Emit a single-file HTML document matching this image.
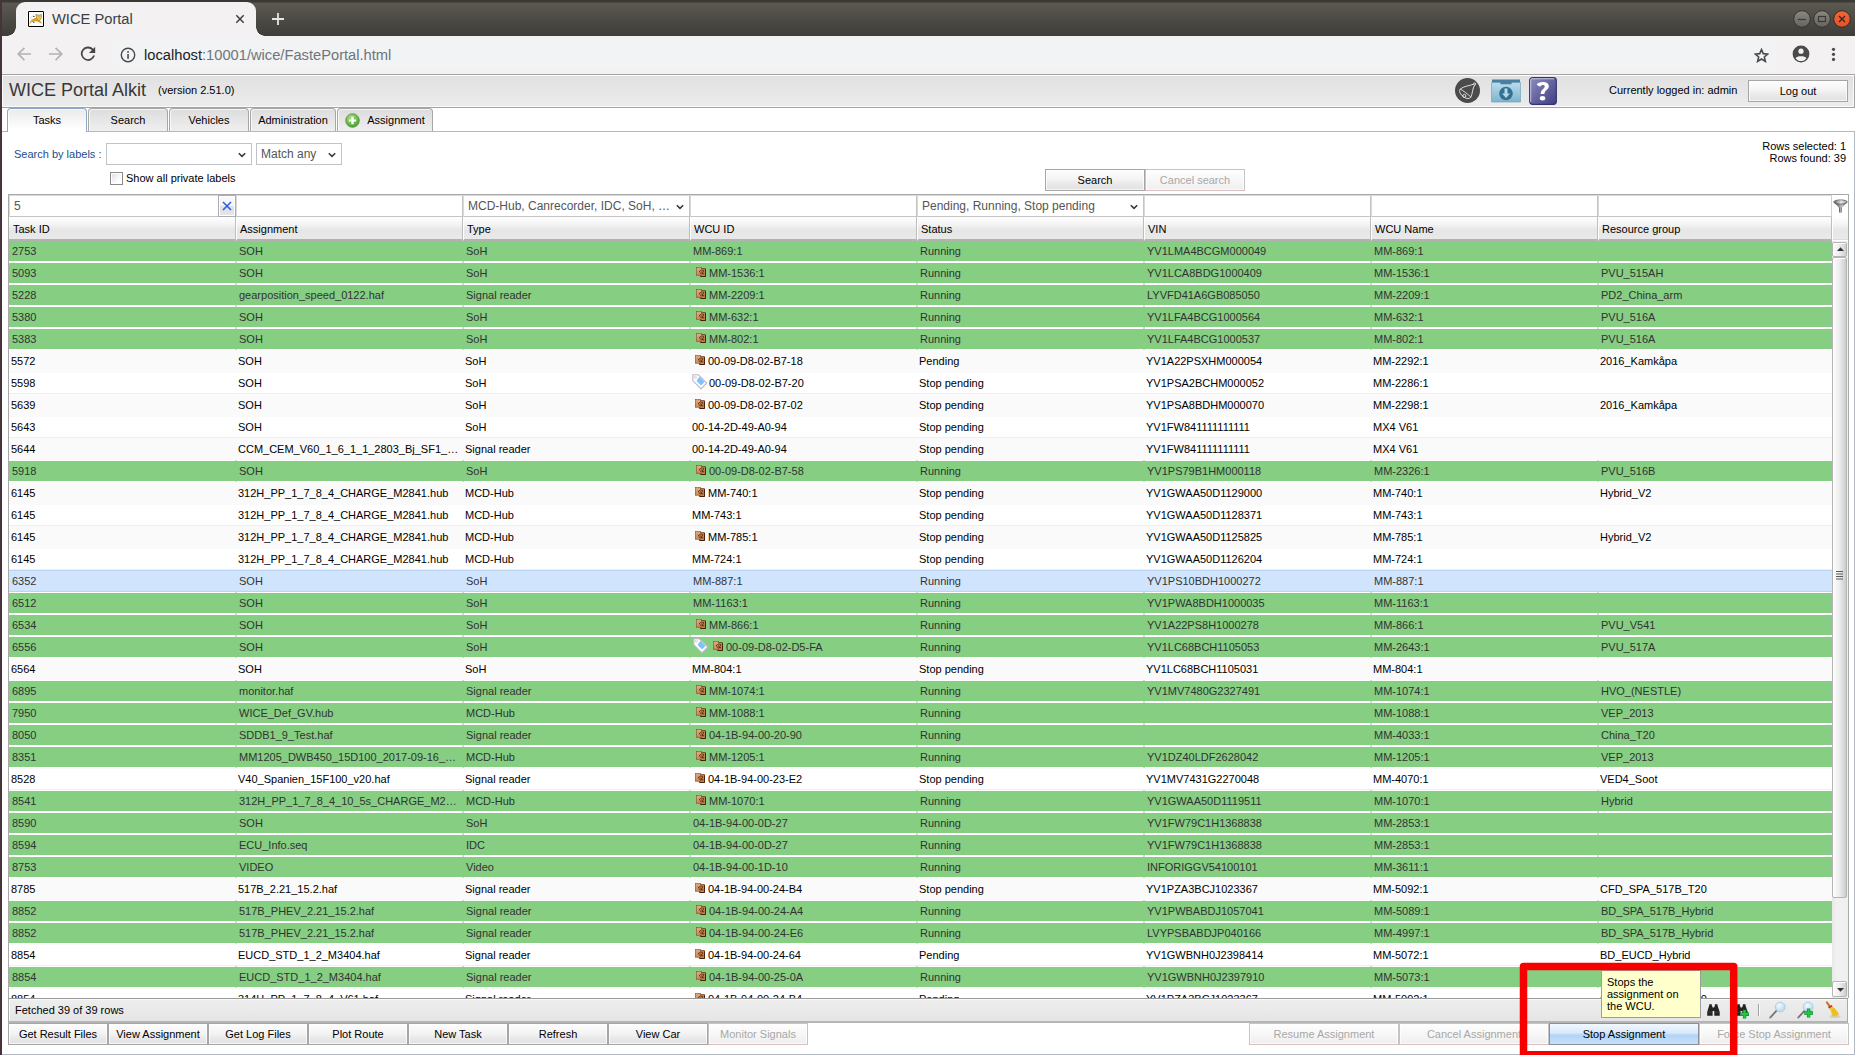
<!DOCTYPE html>
<html><head><meta charset="utf-8"><title>WICE Portal</title>
<style>
*{box-sizing:border-box;margin:0;padding:0}
html,body{width:1855px;height:1055px;overflow:hidden;background:#fff}
body{font-family:"Liberation Sans",sans-serif;font-size:11px;color:#000;position:relative}
.abs{position:absolute}
svg{display:block}
/* window chrome */
#titlebar{position:absolute;left:0;top:0;width:1855px;height:36px;background:linear-gradient(#3a3935 0,#3a3935 2px,#5b5951 3px,#4d4b45 19px,#3f3d39 36px)}
#lborder{position:absolute;left:0;top:0;width:2px;height:1055px;background:#46343a}
#ctab{position:absolute;left:16px;top:2px;width:240px;height:34px;background:#f3f1f1;border-radius:9px 9px 0 0}
#ctab:before,#ctab:after{content:"";position:absolute;bottom:0;width:9px;height:9px}
#ctab:before{left:-9px;background:radial-gradient(circle at 0 0,transparent 8.5px,#f3f1f1 9px)}
#ctab:after{right:-9px;background:radial-gradient(circle at 100% 0,transparent 8.5px,#f3f1f1 9px)}
#ctab .ttl{position:absolute;left:36px;top:9px;font-size:14.7px;color:#3b3f43;white-space:nowrap}
#toolbar{position:absolute;left:2px;top:36px;width:1853px;height:39px;background:#f3f1f1;border-bottom:1px solid #a4a4a4}
#omni{position:absolute;left:110px;top:4px;width:1666px;height:29px;border-radius:15px;background:#f1f3f4}
#url{position:absolute;left:142px;top:11px;font-size:14.7px;color:#202124;white-space:nowrap}
#url i{font-style:normal;color:#70757a}
/* page header */
#phead{position:absolute;left:2px;top:75px;width:1853px;height:33px;background:linear-gradient(#e1e1e1 0,#ececec 100%);border-top:1px solid #fdfdfd;border-right:1px solid #a3a3a3;box-shadow:inset 1px -1px 0 #fafafa,inset -1px 0 0 #fafafa;border-bottom:1px solid #a3a3a3}
#ptitle{position:absolute;left:7px;top:4px;font-size:18px;color:#383838;white-space:nowrap}
#pver{position:absolute;left:156px;top:8px;font-size:11px;color:#000}
.btn{position:absolute;height:22px;border:1px solid #a6a6a6;background:linear-gradient(#fdfdfd 0%,#f4f4f4 45%,#e9e9e9 70%,#e1e1e1 100%);font-size:11px;text-align:center;line-height:20px;color:#000;white-space:nowrap;box-shadow:inset 0 0 0 1px rgba(255,255,255,.7)}
.btn.dis{color:#a8a8a8;border-color:#c4c4c4 #c4c4c4 #d9c0c0 #c4c4c4;background:linear-gradient(#fefefe,#f7f7f7 50%,#eeeeee)}
.btn.over{background:linear-gradient(#f2f8ff 0%,#d9e9fb 45%,#b3d4f6 55%,#c6dff9 100%);border-color:#8a9099;box-shadow:none}
/* tabs */
.tab{position:absolute;top:108px;height:23px;border:1px solid #a7a7a7;border-bottom:none;border-radius:4px 4px 0 0;background:linear-gradient(#dcdcdc,#e6e6e6 50%,#efefef);font-size:11px;text-align:center;line-height:23px;box-shadow:inset 1px 1px 0 rgba(255,255,255,.7)}
.tab.sel{background:linear-gradient(#eaeaea,#f6f6f6 50%,#ffffff 90%);border-color:#8fa6c4;height:24px;z-index:3}
#pane{position:absolute;left:2px;top:131px;width:1853px;height:924px;border:1px solid #b3b9c2;border-left:none;background:#fff}
.sel1{position:absolute;height:22px;border:1px solid #c0c3c7;background:#fff;font-size:12px;color:#555;line-height:20px;padding-left:4px;white-space:nowrap;overflow:hidden}
.chev{position:absolute;right:5px;top:8px}
/* grid */
#grid{position:absolute;left:8px;top:194px;width:1841px;height:804px;border:1px solid #a9a9a9;border-bottom:none;background:#fff;overflow:hidden}
#filter{position:absolute;left:0;top:0;width:1839px;height:22px;background:#fff}
.fcell{position:absolute;top:0;height:22px;border:1px solid #c4c4c4;border-top-color:#d9d9d9;border-left-color:#d9d9d9;background:#fff;font-size:12px;color:#555;line-height:20px;padding-left:4px;white-space:nowrap;overflow:hidden}
#hdr{position:absolute;left:0;top:22px;width:1839px;height:24px;z-index:5}
.h{position:absolute;top:0;height:24px;background:linear-gradient(#ffffff 0%,#f3f3f3 35%,#e6e6e6 60%,#e9e9e9 100%);border-right:1px solid #bdbdbd;border-left:1px solid #fff;border-bottom:2px solid #b2b2b2;font-size:11px;line-height:24px;padding-left:3px;color:#000;white-space:nowrap}
#body{position:absolute;left:0;top:45px;width:1824px;height:758px;overflow:hidden;background:#fff}
.r{position:absolute;left:0;width:1824px;height:22px;white-space:nowrap}
.r>div{position:absolute;top:0;height:22px;line-height:22px;padding-left:2px;overflow:hidden;font-size:11px}
.r.w{background:#fff;box-shadow:inset 0 1px 0 #fafafa,inset 0 -1px 0 #efefef}
.r.w.a{background:#fafafa;box-shadow:none}
.r.g{background:linear-gradient(#c2e6c0 0,#c2e6c0 1px,#85ce82 1px,#85ce82 21px,#c2e6c0 21px)}
.r.g>div{color:#333;box-shadow:inset 0 1px 0 #fff,inset 0 -1px 0 #fff;padding-left:3px}
.r.s{background:#d0e5fd;border-top:1px solid #bad5f3;border-bottom:1px solid #bad5f3}
.r.s>div{color:#333;padding-left:3px;top:-1px}
.c0{left:0;width:226px}.c1{left:228px;width:225px}.c2{left:455px;width:225px}.c3{left:682px;width:225px}
.c4{left:909px;width:225px}.c5{left:1136px;width:225px}.c6{left:1363px;width:225px}.c7{left:1590px;width:234px}
.r.w>div+div{margin-left:-1px}
.ib{position:absolute;left:5px;top:5px}
.it{position:absolute;left:2px;top:2px}
.ib+span,.it+span{position:absolute;left:18px}
.ktb .ib{left:22px}
.ktb span{left:35px !important}
.kt span{left:19px !important}
.r.g>div+div,.r.s>div+div{padding-left:2px}
/* scrollbar */
#sb{position:absolute;left:1823px;top:46px;width:16px;height:757px;background:linear-gradient(90deg,#e9e9e9,#f1f1f1 30%,#efefef)}
#status{position:absolute;left:8px;top:998px;width:1840px;height:25px;background:linear-gradient(#eeeeee,#e5e5e5);box-shadow:inset 1px 1px 0 #f9f9f9;border:1px solid #a9a9a9;border-top:1px solid #999;border-bottom:2px solid #b5b5b5;font-size:11px;line-height:22px;padding-left:6px}
</style></head><body>
<div id="titlebar"></div>
<div id="ctab"><span class="ttl">WICE Portal</span>
 <svg class="abs" style="left:11px;top:8px;overflow:visible" width="18" height="18" viewBox="-1 -1 18 18"><rect x="-0.6" y="-0.6" width="17.2" height="17.2" rx="1.5" fill="#fff"/><rect x="0.5" y="0.5" width="15" height="15" rx="0.2" fill="#fff" stroke="#000" stroke-width="1"/><path d="M3.4 9 C1.9 7.2 2.8 5.2 5.2 5.2" fill="none" stroke="#d6d6d6" stroke-width="0.9"/><path d="M5 5.3 L6.6 5.6" stroke="#333" stroke-width="0.9"/><path d="M1.3 12.5 L2.8 9.8 C4.8 7.6 7.6 6.4 9.2 6.8 L11.6 9 L14.4 12.4 L12.6 12.2 L9.4 10.6 L6.2 10.5 L3.4 11 L2.5 12.6 Z" fill="#dba22c"/><path d="M5 10.6 L6.4 12" stroke="#222" stroke-width="1"/><path d="M7.9 3.1 L8.8 4 H12.3 L13.3 3.1 L13.4 6.6 L12.2 9 L10.2 9.4 L8.7 7.6 Z" fill="#f4ca4c" stroke="#8f7030" stroke-width="0.6"/><path d="M9.6 5.2 H12 V7 H10 Z" fill="#e3b340"/></svg>
 <svg class="abs" style="left:219px;top:12px" width="10" height="10" viewBox="0 0 10 10"><path d="M1.3 1.3 L8.7 8.7 M8.7 1.3 L1.3 8.7" stroke="#3c4043" stroke-width="1.5" fill="none"/></svg>
</div>
<svg class="abs" style="left:271px;top:12px" width="14" height="14" viewBox="0 0 14 14"><path d="M7 1 V13 M1 7 H13" stroke="#e6e6e6" stroke-width="1.8"/></svg>
<!-- window buttons -->
<svg class="abs" style="left:1790px;top:8px" width="64" height="22" viewBox="0 0 64 22">
 <defs><linearGradient id="wg" x1="0" y1="0" x2="0" y2="1"><stop offset="0" stop-color="#8a8880"/><stop offset="1" stop-color="#65635c"/></linearGradient>
 <linearGradient id="wr" x1="0" y1="0" x2="0" y2="1"><stop offset="0" stop-color="#f0653a"/><stop offset="1" stop-color="#e3532a"/></linearGradient></defs>
 <circle cx="12" cy="11" r="8.3" fill="url(#wg)" stroke="#35342d" stroke-width="1"/>
 <circle cx="32" cy="11" r="8.3" fill="url(#wg)" stroke="#35342d" stroke-width="1"/>
 <circle cx="52" cy="11" r="8.3" fill="url(#wr)" stroke="#3a2a22" stroke-width="1"/>
 <path d="M8 11.5 H16" stroke="#3a3934" stroke-width="1.2"/>
 <rect x="28.5" y="8.5" width="7" height="5" fill="none" stroke="#3a3934" stroke-width="1.2"/>
 <path d="M49 8 L55 14 M55 8 L49 14" stroke="#3a2418" stroke-width="1.3"/>
</svg>
<div id="toolbar"><div id="omni"></div><div id="url">localhost<i>:10001/wice/FastePortal.html</i></div>
 <svg class="abs" style="left:14px;top:10px" width="16" height="16" viewBox="0 0 16 16"><path d="M15 7.2 H4.2 L9 2.4 L7.9 1.3 L1 8 L7.9 14.7 L9 13.6 L4.2 8.8 H15 Z" fill="#b3b3b3"/></svg>
 <svg class="abs" style="left:46px;top:10px" width="16" height="16" viewBox="0 0 16 16"><path d="M1 7.2 H11.8 L7 2.4 L8.1 1.3 L15 8 L8.1 14.7 L7 13.6 L11.8 8.8 H1 Z" fill="#b3b3b3"/></svg>
 <svg class="abs" style="left:78px;top:10px" width="16" height="16" viewBox="0 0 16 16"><path d="M13.3 2.7 A7.2 7.2 0 1 0 15 9.6 H13.1 A5.4 5.4 0 1 1 11.9 4.1 L9 7 H15.2 V0.8 Z" fill="#474747"/></svg>
 <svg class="abs" style="left:118px;top:11px" width="16" height="16" viewBox="0 0 15 15"><circle cx="7.5" cy="7.5" r="6.3" fill="none" stroke="#4a4a4a" stroke-width="1.3"/><rect x="6.8" y="6.6" width="1.5" height="4.4" fill="#4a4a4a"/><rect x="6.8" y="3.9" width="1.5" height="1.6" fill="#4a4a4a"/></svg>
 <svg class="abs" style="left:1752px;top:12px" width="15" height="15" viewBox="0 0 17 17"><path d="M8.5 1.8 L10.5 6.4 L15.5 6.9 L11.7 10.2 L12.9 15.2 L8.5 12.5 L4.1 15.2 L5.3 10.2 L1.5 6.9 L6.5 6.4 Z" fill="none" stroke="#4a4a4a" stroke-width="1.8" stroke-linejoin="miter"/></svg>
 <svg class="abs" style="left:1790px;top:9px" width="18" height="18" viewBox="0 0 18 18"><circle cx="9" cy="9" r="8.4" fill="#4a4a4a"/><circle cx="9" cy="6.2" r="2.6" fill="#f3f1f1"/><path d="M3.6 13.2 C4.8 10.6 13.2 10.6 14.4 13.2 C13 15.2 11 16 9 16 C7 16 5 15.2 3.6 13.2 Z" fill="#f3f1f1"/></svg>
 <svg class="abs" style="left:1829px;top:11px" width="5" height="15" viewBox="0 0 5 15"><circle cx="2.5" cy="2.3" r="1.6" fill="#4a4a4a"/><circle cx="2.5" cy="7.3" r="1.6" fill="#4a4a4a"/><circle cx="2.5" cy="12.4" r="1.6" fill="#4a4a4a"/></svg>
</div>
<div id="phead">
 <div id="ptitle">WICE Portal Alkit</div><div id="pver">(version 2.51.0)</div>
 <svg class="abs" style="left:1452px;top:1px" width="27" height="27" viewBox="0 0 27 27"><circle cx="13.5" cy="13.5" r="12.5" fill="#4b4b4b"/><g fill="none" stroke="#ececec" stroke-width="0.9"><path d="M19.6 7.2 C15.5 8.8 9.5 9.2 6.3 12 C4.4 13.8 6.4 17.6 9.6 19.9 C12.6 22 15.8 22 16.9 20.1 C18.6 16.6 18.4 11.6 20.6 8.2"/><path d="M6.3 12 C8 13 14.5 17.5 16.9 20.1"/><circle cx="10.3" cy="18.9" r="1.5"/><circle cx="20.6" cy="7" r="1.1"/></g></svg>
 <svg class="abs" style="left:1489px;top:3px" width="30" height="24" viewBox="0 0 30 24"><defs><linearGradient id="fg" x1="0" y1="0" x2="0" y2="1"><stop offset="0" stop-color="#b9dced"/><stop offset="1" stop-color="#7fb4cf"/></linearGradient></defs><path d="M1 0.5 H29 V5 H1 Z" fill="#4a7f9e"/><path d="M0.5 3.5 H9 L10 5.3 H20 L21 3.5 H29.5 V23 H0.5 Z" fill="url(#fg)" stroke="#6a9cb6" stroke-width="0.6"/><circle cx="15" cy="14.5" r="6.8" fill="#35708f"/><path d="M13.5 9.5 H16.5 V14.5 H19 L15 19 L11 14.5 H13.5 Z" fill="#b5d8ea"/></svg>
 <svg class="abs" style="left:1527px;top:1px" width="28" height="28" viewBox="0 0 29 29"><defs><linearGradient id="hg" x1="0" y1="0" x2="1" y2="1"><stop offset="0" stop-color="#8d8cc0"/><stop offset="1" stop-color="#3f3e82"/></linearGradient></defs><rect x="0.7" y="0.7" width="27.6" height="27.6" rx="3" fill="url(#hg)" stroke="#34336e" stroke-width="1.2"/><path d="M1.8 26 V3 Q1.8 1.8 3 1.8 H26" fill="none" stroke="#c9c8e6" stroke-width="1"/><path d="M8 8 C9 4.5 20.5 3.5 20.5 9.5 C20.5 13.5 15.8 13.5 16 17.5 H12.2 C12 12.5 16.3 12.5 16.3 9.8 C16.3 7.8 12.5 8 11.5 10 Z" fill="#fff"/><ellipse cx="14" cy="22" rx="2.8" ry="2.3" fill="#fff"/></svg>
 <div class="abs" style="left:1607px;top:8px;font-size:11px;white-space:nowrap">Currently logged in: admin</div>
 <div class="btn" style="left:1746px;top:4px;width:100px">Log out</div>
</div>
<div id="pane"></div>
<div class="tab sel" style="left:7px;width:80px">Tasks</div>
<div class="tab" style="left:88px;width:80px">Search</div>
<div class="tab" style="left:169px;width:80px">Vehicles</div>
<div class="tab" style="left:250px;width:86px">Administration</div>
<div class="tab" style="left:337px;width:96px;padding-left:22px">Assignment
 <svg class="abs" style="left:7px;top:4px" width="15" height="15" viewBox="0 0 15 15"><defs><radialGradient id="gg" cx="0.4" cy="0.3" r="0.8"><stop offset="0" stop-color="#a8e07c"/><stop offset="1" stop-color="#3f9a2a"/></radialGradient></defs><circle cx="7.5" cy="7.5" r="6.8" fill="url(#gg)" stroke="#4c8f3a" stroke-width="0.8"/><path d="M7.5 3.8 V11.2 M3.8 7.5 H11.2" stroke="#fff" stroke-width="2.2"/></svg>
</div>

<div class="abs" style="left:14px;top:148px;color:#1c4d8f;font-size:11px;white-space:nowrap">Search by labels :</div>
<div class="sel1" style="left:106px;top:143px;width:146px"><svg class="chev" width="8" height="6" viewBox="0 0 8 6"><path d="M0.8 1.2 L4 4.4 L7.2 1.2" stroke="#3a3a3a" stroke-width="1.6" fill="none"/></svg></div>
<div class="sel1" style="left:256px;top:143px;width:86px">Match any<svg class="chev" width="8" height="6" viewBox="0 0 8 6"><path d="M0.8 1.2 L4 4.4 L7.2 1.2" stroke="#3a3a3a" stroke-width="1.6" fill="none"/></svg></div>
<div class="abs" style="left:110px;top:172px;width:13px;height:13px;border:1px solid #8a8a8a;background:linear-gradient(135deg,#dcdcdc,#fff 70%);box-shadow:inset 0 0 0 1px #fff"></div>
<div class="abs" style="left:126px;top:172px;white-space:nowrap">Show all private labels</div>
<div class="abs" style="left:1700px;top:140px;width:146px;text-align:right;line-height:12px;white-space:nowrap">Rows selected: 1<br>Rows found: 39</div>
<div class="btn" style="left:1045px;top:169px;width:100px">Search</div>
<div class="btn dis" style="left:1145px;top:169px;width:100px">Cancel search</div>
<div id="grid">
 <div id="filter">
  <div class="fcell" style="left:0;width:227px">5</div>
  <div class="abs" style="left:209px;top:0;width:18px;height:22px;border:1px solid #a9adb6;background:linear-gradient(#fafafa 0,#f2f2f2 50%,#e0e0e0 50%,#e6e6e6 100%);box-shadow:inset 0 0 0 1px #fff"><svg class="abs" style="left:3px;top:5px" width="10" height="10" viewBox="0 0 10 10"><path d="M1 1 L9 9 M9 1 L1 9" stroke="#1f5cf0" stroke-width="1.5"/></svg></div>
  <div class="fcell" style="left:227px;width:227px"></div>
  <div class="fcell" style="left:454px;width:227px">MCD-Hub, Canrecorder, IDC, SoH, …<svg class="chev" width="8" height="6" viewBox="0 0 8 6"><path d="M0.8 1.2 L4 4.4 L7.2 1.2" stroke="#3a3a3a" stroke-width="1.6" fill="none"/></svg></div>
  <div class="fcell" style="left:681px;width:227px"></div>
  <div class="fcell" style="left:908px;width:227px">Pending, Running, Stop pending<svg class="chev" width="8" height="6" viewBox="0 0 8 6"><path d="M0.8 1.2 L4 4.4 L7.2 1.2" stroke="#3a3a3a" stroke-width="1.6" fill="none"/></svg></div>
  <div class="fcell" style="left:1135px;width:227px"></div>
  <div class="fcell" style="left:1362px;width:227px"></div>
  <div class="fcell" style="left:1589px;width:234px"></div>
  <div class="abs" style="left:1822px;top:0;width:17px;height:23px;border-left:1px solid #d0d0d0;background:#fff"><svg class="abs" style="left:1px;top:4px" width="15" height="15" viewBox="0 0 15 15"><defs><linearGradient id="fu" x1="0" y1="0" x2="1" y2="0"><stop offset="0" stop-color="#3a3a3a"/><stop offset="0.6" stop-color="#c4c4c4"/><stop offset="1" stop-color="#5c5c5c"/></linearGradient><linearGradient id="fu2" x1="0" y1="0" x2="1" y2="0"><stop offset="0" stop-color="#5c5c5c"/><stop offset="0.55" stop-color="#ececec"/><stop offset="1" stop-color="#909090"/></linearGradient></defs><path d="M0.9 3.2 L6.2 9 H8.8 L14.1 3.2 Z" fill="url(#fu)"/><path d="M6.1 8.6 H8.9 V13.3 Q7.5 14.3 6.1 13.3 Z" fill="url(#fu)"/><ellipse cx="7.5" cy="3" rx="6.8" ry="2.1" fill="url(#fu2)" stroke="#5c5c5c" stroke-width="0.8"/></svg></div>
 </div>
 <div id="hdr">
  <div class="h" style="left:0;width:227px;border-left:none;padding-left:4px">Task ID</div>
  <div class="h" style="left:227px;width:227px">Assignment</div>
  <div class="h" style="left:454px;width:227px">Type</div>
  <div class="h" style="left:681px;width:227px">WCU ID</div>
  <div class="h" style="left:908px;width:227px">Status</div>
  <div class="h" style="left:1135px;width:227px">VIN</div>
  <div class="h" style="left:1362px;width:227px">WCU Name</div>
  <div class="h" style="left:1589px;width:234px">Resource group</div>
  <div class="h" style="left:1823px;width:16px;border-right:none;border-bottom:1px solid #dcdcdc;height:23px"></div>
 </div>
 <div id="body">
<div class="r g" style="top:0px"><div class="c0">2753</div><div class="c1">SOH</div><div class="c2">SoH</div><div class="c3"><span>MM-869:1</span></div><div class="c4">Running</div><div class="c5">YV1LMA4BCGM000049</div><div class="c6">MM-869:1</div><div class="c7"></div></div>
<div class="r g" style="top:22px"><div class="c0">5093</div><div class="c1">SOH</div><div class="c2">SoH</div><div class="c3 kb"><svg class="ib" width="10" height="10" viewBox="0 0 10 10"><defs><linearGradient id="bx" x1="0" y1="0" x2="0" y2="1"><stop offset="0" stop-color="#e3ac7c"/><stop offset="1" stop-color="#c98858"/></linearGradient></defs><rect x="4.3" y="1.7" width="5.3" height="7.9" fill="#c08552" stroke="#5a2a0c" stroke-width="0.7"/><path d="M9.5 2.4 V9.5 H5" stroke="#431a04" stroke-width="0.9" fill="none"/><rect x="0.2" y="0.2" width="5.4" height="8" fill="url(#bx)" stroke="#7a4420" stroke-width="0.6"/><path d="M4.6 3.2 L3.4 5 L5 6.6 M6.4 3.2 C7.8 2.8 8 4.2 6.6 5.6 L6.4 6.8 H8.2" stroke="#3a1804" stroke-width="0.85" fill="none"/></svg><span>MM-1536:1</span></div><div class="c4">Running</div><div class="c5">YV1LCA8BDG1000409</div><div class="c6">MM-1536:1</div><div class="c7">PVU_515AH</div></div>
<div class="r g" style="top:44px"><div class="c0">5228</div><div class="c1">gearposition_speed_0122.haf</div><div class="c2">Signal reader</div><div class="c3 kb"><svg class="ib" width="10" height="10" viewBox="0 0 10 10"><defs><linearGradient id="bx" x1="0" y1="0" x2="0" y2="1"><stop offset="0" stop-color="#e3ac7c"/><stop offset="1" stop-color="#c98858"/></linearGradient></defs><rect x="4.3" y="1.7" width="5.3" height="7.9" fill="#c08552" stroke="#5a2a0c" stroke-width="0.7"/><path d="M9.5 2.4 V9.5 H5" stroke="#431a04" stroke-width="0.9" fill="none"/><rect x="0.2" y="0.2" width="5.4" height="8" fill="url(#bx)" stroke="#7a4420" stroke-width="0.6"/><path d="M4.6 3.2 L3.4 5 L5 6.6 M6.4 3.2 C7.8 2.8 8 4.2 6.6 5.6 L6.4 6.8 H8.2" stroke="#3a1804" stroke-width="0.85" fill="none"/></svg><span>MM-2209:1</span></div><div class="c4">Running</div><div class="c5">LYVFD41A6GB085050</div><div class="c6">MM-2209:1</div><div class="c7">PD2_China_arm</div></div>
<div class="r g" style="top:66px"><div class="c0">5380</div><div class="c1">SOH</div><div class="c2">SoH</div><div class="c3 kb"><svg class="ib" width="10" height="10" viewBox="0 0 10 10"><defs><linearGradient id="bx" x1="0" y1="0" x2="0" y2="1"><stop offset="0" stop-color="#e3ac7c"/><stop offset="1" stop-color="#c98858"/></linearGradient></defs><rect x="4.3" y="1.7" width="5.3" height="7.9" fill="#c08552" stroke="#5a2a0c" stroke-width="0.7"/><path d="M9.5 2.4 V9.5 H5" stroke="#431a04" stroke-width="0.9" fill="none"/><rect x="0.2" y="0.2" width="5.4" height="8" fill="url(#bx)" stroke="#7a4420" stroke-width="0.6"/><path d="M4.6 3.2 L3.4 5 L5 6.6 M6.4 3.2 C7.8 2.8 8 4.2 6.6 5.6 L6.4 6.8 H8.2" stroke="#3a1804" stroke-width="0.85" fill="none"/></svg><span>MM-632:1</span></div><div class="c4">Running</div><div class="c5">YV1LFA4BCG1000564</div><div class="c6">MM-632:1</div><div class="c7">PVU_516A</div></div>
<div class="r g" style="top:88px"><div class="c0">5383</div><div class="c1">SOH</div><div class="c2">SoH</div><div class="c3 kb"><svg class="ib" width="10" height="10" viewBox="0 0 10 10"><defs><linearGradient id="bx" x1="0" y1="0" x2="0" y2="1"><stop offset="0" stop-color="#e3ac7c"/><stop offset="1" stop-color="#c98858"/></linearGradient></defs><rect x="4.3" y="1.7" width="5.3" height="7.9" fill="#c08552" stroke="#5a2a0c" stroke-width="0.7"/><path d="M9.5 2.4 V9.5 H5" stroke="#431a04" stroke-width="0.9" fill="none"/><rect x="0.2" y="0.2" width="5.4" height="8" fill="url(#bx)" stroke="#7a4420" stroke-width="0.6"/><path d="M4.6 3.2 L3.4 5 L5 6.6 M6.4 3.2 C7.8 2.8 8 4.2 6.6 5.6 L6.4 6.8 H8.2" stroke="#3a1804" stroke-width="0.85" fill="none"/></svg><span>MM-802:1</span></div><div class="c4">Running</div><div class="c5">YV1LFA4BCG1000537</div><div class="c6">MM-802:1</div><div class="c7">PVU_516A</div></div>
<div class="r w a" style="top:110px"><div class="c0">5572</div><div class="c1">SOH</div><div class="c2">SoH</div><div class="c3 kb"><svg class="ib" width="10" height="10" viewBox="0 0 10 10"><defs><linearGradient id="bx" x1="0" y1="0" x2="0" y2="1"><stop offset="0" stop-color="#e3ac7c"/><stop offset="1" stop-color="#c98858"/></linearGradient></defs><rect x="4.3" y="1.7" width="5.3" height="7.9" fill="#c08552" stroke="#5a2a0c" stroke-width="0.7"/><path d="M9.5 2.4 V9.5 H5" stroke="#431a04" stroke-width="0.9" fill="none"/><rect x="0.2" y="0.2" width="5.4" height="8" fill="url(#bx)" stroke="#7a4420" stroke-width="0.6"/><path d="M4.6 3.2 L3.4 5 L5 6.6 M6.4 3.2 C7.8 2.8 8 4.2 6.6 5.6 L6.4 6.8 H8.2" stroke="#3a1804" stroke-width="0.85" fill="none"/></svg><span>00-09-D8-02-B7-18</span></div><div class="c4">Pending</div><div class="c5">YV1A22PSXHM000054</div><div class="c6">MM-2292:1</div><div class="c7">2016_Kamkåpa</div></div>
<div class="r w" style="top:132px"><div class="c0">5598</div><div class="c1">SOH</div><div class="c2">SoH</div><div class="c3 kt"><svg class="it" width="16" height="16" viewBox="0 0 16 16"><path d="M0.8 0.8 L6.3 0.8 L14.8 9 L9 14.9 L0.8 6.6 Z" fill="#fff" stroke="#c3b4ca" stroke-width="1.1"/><path d="M6.2 4.2 L7.6 3 L12.6 8 L9 11.4 L4.6 7 Z" fill="#7cc4fb"/><circle cx="3.3" cy="3.3" r="1.1" fill="#fff" stroke="#bdbdbd" stroke-width="0.7"/></svg><span>00-09-D8-02-B7-20</span></div><div class="c4">Stop pending</div><div class="c5">YV1PSA2BCHM000052</div><div class="c6">MM-2286:1</div><div class="c7"></div></div>
<div class="r w a" style="top:154px"><div class="c0">5639</div><div class="c1">SOH</div><div class="c2">SoH</div><div class="c3 kb"><svg class="ib" width="10" height="10" viewBox="0 0 10 10"><defs><linearGradient id="bx" x1="0" y1="0" x2="0" y2="1"><stop offset="0" stop-color="#e3ac7c"/><stop offset="1" stop-color="#c98858"/></linearGradient></defs><rect x="4.3" y="1.7" width="5.3" height="7.9" fill="#c08552" stroke="#5a2a0c" stroke-width="0.7"/><path d="M9.5 2.4 V9.5 H5" stroke="#431a04" stroke-width="0.9" fill="none"/><rect x="0.2" y="0.2" width="5.4" height="8" fill="url(#bx)" stroke="#7a4420" stroke-width="0.6"/><path d="M4.6 3.2 L3.4 5 L5 6.6 M6.4 3.2 C7.8 2.8 8 4.2 6.6 5.6 L6.4 6.8 H8.2" stroke="#3a1804" stroke-width="0.85" fill="none"/></svg><span>00-09-D8-02-B7-02</span></div><div class="c4">Stop pending</div><div class="c5">YV1PSA8BDHM000070</div><div class="c6">MM-2298:1</div><div class="c7">2016_Kamkåpa</div></div>
<div class="r w" style="top:176px"><div class="c0">5643</div><div class="c1">SOH</div><div class="c2">SoH</div><div class="c3"><span>00-14-2D-49-A0-94</span></div><div class="c4">Stop pending</div><div class="c5">YV1FW841111111111</div><div class="c6">MX4 V61</div><div class="c7"></div></div>
<div class="r w a" style="top:198px"><div class="c0">5644</div><div class="c1">CCM_CEM_V60_1_6_1_1_2803_Bj_SF1_…</div><div class="c2">Signal reader</div><div class="c3"><span>00-14-2D-49-A0-94</span></div><div class="c4">Stop pending</div><div class="c5">YV1FW841111111111</div><div class="c6">MX4 V61</div><div class="c7"></div></div>
<div class="r g" style="top:220px"><div class="c0">5918</div><div class="c1">SOH</div><div class="c2">SoH</div><div class="c3 kb"><svg class="ib" width="10" height="10" viewBox="0 0 10 10"><defs><linearGradient id="bx" x1="0" y1="0" x2="0" y2="1"><stop offset="0" stop-color="#e3ac7c"/><stop offset="1" stop-color="#c98858"/></linearGradient></defs><rect x="4.3" y="1.7" width="5.3" height="7.9" fill="#c08552" stroke="#5a2a0c" stroke-width="0.7"/><path d="M9.5 2.4 V9.5 H5" stroke="#431a04" stroke-width="0.9" fill="none"/><rect x="0.2" y="0.2" width="5.4" height="8" fill="url(#bx)" stroke="#7a4420" stroke-width="0.6"/><path d="M4.6 3.2 L3.4 5 L5 6.6 M6.4 3.2 C7.8 2.8 8 4.2 6.6 5.6 L6.4 6.8 H8.2" stroke="#3a1804" stroke-width="0.85" fill="none"/></svg><span>00-09-D8-02-B7-58</span></div><div class="c4">Running</div><div class="c5">YV1PS79B1HM000118</div><div class="c6">MM-2326:1</div><div class="c7">PVU_516B</div></div>
<div class="r w a" style="top:242px"><div class="c0">6145</div><div class="c1">312H_PP_1_7_8_4_CHARGE_M2841.hub</div><div class="c2">MCD-Hub</div><div class="c3 kb"><svg class="ib" width="10" height="10" viewBox="0 0 10 10"><defs><linearGradient id="bx" x1="0" y1="0" x2="0" y2="1"><stop offset="0" stop-color="#e3ac7c"/><stop offset="1" stop-color="#c98858"/></linearGradient></defs><rect x="4.3" y="1.7" width="5.3" height="7.9" fill="#c08552" stroke="#5a2a0c" stroke-width="0.7"/><path d="M9.5 2.4 V9.5 H5" stroke="#431a04" stroke-width="0.9" fill="none"/><rect x="0.2" y="0.2" width="5.4" height="8" fill="url(#bx)" stroke="#7a4420" stroke-width="0.6"/><path d="M4.6 3.2 L3.4 5 L5 6.6 M6.4 3.2 C7.8 2.8 8 4.2 6.6 5.6 L6.4 6.8 H8.2" stroke="#3a1804" stroke-width="0.85" fill="none"/></svg><span>MM-740:1</span></div><div class="c4">Stop pending</div><div class="c5">YV1GWAA50D1129000</div><div class="c6">MM-740:1</div><div class="c7">Hybrid_V2</div></div>
<div class="r w" style="top:264px"><div class="c0">6145</div><div class="c1">312H_PP_1_7_8_4_CHARGE_M2841.hub</div><div class="c2">MCD-Hub</div><div class="c3"><span>MM-743:1</span></div><div class="c4">Stop pending</div><div class="c5">YV1GWAA50D1128371</div><div class="c6">MM-743:1</div><div class="c7"></div></div>
<div class="r w a" style="top:286px"><div class="c0">6145</div><div class="c1">312H_PP_1_7_8_4_CHARGE_M2841.hub</div><div class="c2">MCD-Hub</div><div class="c3 kb"><svg class="ib" width="10" height="10" viewBox="0 0 10 10"><defs><linearGradient id="bx" x1="0" y1="0" x2="0" y2="1"><stop offset="0" stop-color="#e3ac7c"/><stop offset="1" stop-color="#c98858"/></linearGradient></defs><rect x="4.3" y="1.7" width="5.3" height="7.9" fill="#c08552" stroke="#5a2a0c" stroke-width="0.7"/><path d="M9.5 2.4 V9.5 H5" stroke="#431a04" stroke-width="0.9" fill="none"/><rect x="0.2" y="0.2" width="5.4" height="8" fill="url(#bx)" stroke="#7a4420" stroke-width="0.6"/><path d="M4.6 3.2 L3.4 5 L5 6.6 M6.4 3.2 C7.8 2.8 8 4.2 6.6 5.6 L6.4 6.8 H8.2" stroke="#3a1804" stroke-width="0.85" fill="none"/></svg><span>MM-785:1</span></div><div class="c4">Stop pending</div><div class="c5">YV1GWAA50D1125825</div><div class="c6">MM-785:1</div><div class="c7">Hybrid_V2</div></div>
<div class="r w" style="top:308px"><div class="c0">6145</div><div class="c1">312H_PP_1_7_8_4_CHARGE_M2841.hub</div><div class="c2">MCD-Hub</div><div class="c3"><span>MM-724:1</span></div><div class="c4">Stop pending</div><div class="c5">YV1GWAA50D1126204</div><div class="c6">MM-724:1</div><div class="c7"></div></div>
<div class="r s" style="top:330px"><div class="c0">6352</div><div class="c1">SOH</div><div class="c2">SoH</div><div class="c3"><span>MM-887:1</span></div><div class="c4">Running</div><div class="c5">YV1PS10BDH1000272</div><div class="c6">MM-887:1</div><div class="c7"></div></div>
<div class="r g" style="top:352px"><div class="c0">6512</div><div class="c1">SOH</div><div class="c2">SoH</div><div class="c3"><span>MM-1163:1</span></div><div class="c4">Running</div><div class="c5">YV1PWA8BDH1000035</div><div class="c6">MM-1163:1</div><div class="c7"></div></div>
<div class="r g" style="top:374px"><div class="c0">6534</div><div class="c1">SOH</div><div class="c2">SoH</div><div class="c3 kb"><svg class="ib" width="10" height="10" viewBox="0 0 10 10"><defs><linearGradient id="bx" x1="0" y1="0" x2="0" y2="1"><stop offset="0" stop-color="#e3ac7c"/><stop offset="1" stop-color="#c98858"/></linearGradient></defs><rect x="4.3" y="1.7" width="5.3" height="7.9" fill="#c08552" stroke="#5a2a0c" stroke-width="0.7"/><path d="M9.5 2.4 V9.5 H5" stroke="#431a04" stroke-width="0.9" fill="none"/><rect x="0.2" y="0.2" width="5.4" height="8" fill="url(#bx)" stroke="#7a4420" stroke-width="0.6"/><path d="M4.6 3.2 L3.4 5 L5 6.6 M6.4 3.2 C7.8 2.8 8 4.2 6.6 5.6 L6.4 6.8 H8.2" stroke="#3a1804" stroke-width="0.85" fill="none"/></svg><span>MM-866:1</span></div><div class="c4">Running</div><div class="c5">YV1A22PS8H1000278</div><div class="c6">MM-866:1</div><div class="c7">PVU_V541</div></div>
<div class="r g" style="top:396px"><div class="c0">6556</div><div class="c1">SOH</div><div class="c2">SoH</div><div class="c3 ktb"><svg class="it" width="16" height="16" viewBox="0 0 16 16"><path d="M0.8 0.8 L6.3 0.8 L14.8 9 L9 14.9 L0.8 6.6 Z" fill="#fff" stroke="#c3b4ca" stroke-width="1.1"/><path d="M6.2 4.2 L7.6 3 L12.6 8 L9 11.4 L4.6 7 Z" fill="#7cc4fb"/><circle cx="3.3" cy="3.3" r="1.1" fill="#fff" stroke="#bdbdbd" stroke-width="0.7"/></svg><svg class="ib" width="10" height="10" viewBox="0 0 10 10"><defs><linearGradient id="bx" x1="0" y1="0" x2="0" y2="1"><stop offset="0" stop-color="#e3ac7c"/><stop offset="1" stop-color="#c98858"/></linearGradient></defs><rect x="4.3" y="1.7" width="5.3" height="7.9" fill="#c08552" stroke="#5a2a0c" stroke-width="0.7"/><path d="M9.5 2.4 V9.5 H5" stroke="#431a04" stroke-width="0.9" fill="none"/><rect x="0.2" y="0.2" width="5.4" height="8" fill="url(#bx)" stroke="#7a4420" stroke-width="0.6"/><path d="M4.6 3.2 L3.4 5 L5 6.6 M6.4 3.2 C7.8 2.8 8 4.2 6.6 5.6 L6.4 6.8 H8.2" stroke="#3a1804" stroke-width="0.85" fill="none"/></svg><span>00-09-D8-02-D5-FA</span></div><div class="c4">Running</div><div class="c5">YV1LC68BCH1105053</div><div class="c6">MM-2643:1</div><div class="c7">PVU_517A</div></div>
<div class="r w a" style="top:418px"><div class="c0">6564</div><div class="c1">SOH</div><div class="c2">SoH</div><div class="c3"><span>MM-804:1</span></div><div class="c4">Stop pending</div><div class="c5">YV1LC68BCH1105031</div><div class="c6">MM-804:1</div><div class="c7"></div></div>
<div class="r g" style="top:440px"><div class="c0">6895</div><div class="c1">monitor.haf</div><div class="c2">Signal reader</div><div class="c3 kb"><svg class="ib" width="10" height="10" viewBox="0 0 10 10"><defs><linearGradient id="bx" x1="0" y1="0" x2="0" y2="1"><stop offset="0" stop-color="#e3ac7c"/><stop offset="1" stop-color="#c98858"/></linearGradient></defs><rect x="4.3" y="1.7" width="5.3" height="7.9" fill="#c08552" stroke="#5a2a0c" stroke-width="0.7"/><path d="M9.5 2.4 V9.5 H5" stroke="#431a04" stroke-width="0.9" fill="none"/><rect x="0.2" y="0.2" width="5.4" height="8" fill="url(#bx)" stroke="#7a4420" stroke-width="0.6"/><path d="M4.6 3.2 L3.4 5 L5 6.6 M6.4 3.2 C7.8 2.8 8 4.2 6.6 5.6 L6.4 6.8 H8.2" stroke="#3a1804" stroke-width="0.85" fill="none"/></svg><span>MM-1074:1</span></div><div class="c4">Running</div><div class="c5">YV1MV7480G2327491</div><div class="c6">MM-1074:1</div><div class="c7">HVO_(NESTLE)</div></div>
<div class="r g" style="top:462px"><div class="c0">7950</div><div class="c1">WICE_Def_GV.hub</div><div class="c2">MCD-Hub</div><div class="c3 kb"><svg class="ib" width="10" height="10" viewBox="0 0 10 10"><defs><linearGradient id="bx" x1="0" y1="0" x2="0" y2="1"><stop offset="0" stop-color="#e3ac7c"/><stop offset="1" stop-color="#c98858"/></linearGradient></defs><rect x="4.3" y="1.7" width="5.3" height="7.9" fill="#c08552" stroke="#5a2a0c" stroke-width="0.7"/><path d="M9.5 2.4 V9.5 H5" stroke="#431a04" stroke-width="0.9" fill="none"/><rect x="0.2" y="0.2" width="5.4" height="8" fill="url(#bx)" stroke="#7a4420" stroke-width="0.6"/><path d="M4.6 3.2 L3.4 5 L5 6.6 M6.4 3.2 C7.8 2.8 8 4.2 6.6 5.6 L6.4 6.8 H8.2" stroke="#3a1804" stroke-width="0.85" fill="none"/></svg><span>MM-1088:1</span></div><div class="c4">Running</div><div class="c5"></div><div class="c6">MM-1088:1</div><div class="c7">VEP_2013</div></div>
<div class="r g" style="top:484px"><div class="c0">8050</div><div class="c1">SDDB1_9_Test.haf</div><div class="c2">Signal reader</div><div class="c3 kb"><svg class="ib" width="10" height="10" viewBox="0 0 10 10"><defs><linearGradient id="bx" x1="0" y1="0" x2="0" y2="1"><stop offset="0" stop-color="#e3ac7c"/><stop offset="1" stop-color="#c98858"/></linearGradient></defs><rect x="4.3" y="1.7" width="5.3" height="7.9" fill="#c08552" stroke="#5a2a0c" stroke-width="0.7"/><path d="M9.5 2.4 V9.5 H5" stroke="#431a04" stroke-width="0.9" fill="none"/><rect x="0.2" y="0.2" width="5.4" height="8" fill="url(#bx)" stroke="#7a4420" stroke-width="0.6"/><path d="M4.6 3.2 L3.4 5 L5 6.6 M6.4 3.2 C7.8 2.8 8 4.2 6.6 5.6 L6.4 6.8 H8.2" stroke="#3a1804" stroke-width="0.85" fill="none"/></svg><span>04-1B-94-00-20-90</span></div><div class="c4">Running</div><div class="c5"></div><div class="c6">MM-4033:1</div><div class="c7">China_T20</div></div>
<div class="r g" style="top:506px"><div class="c0">8351</div><div class="c1">MM1205_DWB450_15D100_2017-09-16_…</div><div class="c2">MCD-Hub</div><div class="c3 kb"><svg class="ib" width="10" height="10" viewBox="0 0 10 10"><defs><linearGradient id="bx" x1="0" y1="0" x2="0" y2="1"><stop offset="0" stop-color="#e3ac7c"/><stop offset="1" stop-color="#c98858"/></linearGradient></defs><rect x="4.3" y="1.7" width="5.3" height="7.9" fill="#c08552" stroke="#5a2a0c" stroke-width="0.7"/><path d="M9.5 2.4 V9.5 H5" stroke="#431a04" stroke-width="0.9" fill="none"/><rect x="0.2" y="0.2" width="5.4" height="8" fill="url(#bx)" stroke="#7a4420" stroke-width="0.6"/><path d="M4.6 3.2 L3.4 5 L5 6.6 M6.4 3.2 C7.8 2.8 8 4.2 6.6 5.6 L6.4 6.8 H8.2" stroke="#3a1804" stroke-width="0.85" fill="none"/></svg><span>MM-1205:1</span></div><div class="c4">Running</div><div class="c5">YV1DZ40LDF2628042</div><div class="c6">MM-1205:1</div><div class="c7">VEP_2013</div></div>
<div class="r w" style="top:528px"><div class="c0">8528</div><div class="c1">V40_Spanien_15F100_v20.haf</div><div class="c2">Signal reader</div><div class="c3 kb"><svg class="ib" width="10" height="10" viewBox="0 0 10 10"><defs><linearGradient id="bx" x1="0" y1="0" x2="0" y2="1"><stop offset="0" stop-color="#e3ac7c"/><stop offset="1" stop-color="#c98858"/></linearGradient></defs><rect x="4.3" y="1.7" width="5.3" height="7.9" fill="#c08552" stroke="#5a2a0c" stroke-width="0.7"/><path d="M9.5 2.4 V9.5 H5" stroke="#431a04" stroke-width="0.9" fill="none"/><rect x="0.2" y="0.2" width="5.4" height="8" fill="url(#bx)" stroke="#7a4420" stroke-width="0.6"/><path d="M4.6 3.2 L3.4 5 L5 6.6 M6.4 3.2 C7.8 2.8 8 4.2 6.6 5.6 L6.4 6.8 H8.2" stroke="#3a1804" stroke-width="0.85" fill="none"/></svg><span>04-1B-94-00-23-E2</span></div><div class="c4">Stop pending</div><div class="c5">YV1MV7431G2270048</div><div class="c6">MM-4070:1</div><div class="c7">VED4_Soot</div></div>
<div class="r g" style="top:550px"><div class="c0">8541</div><div class="c1">312H_PP_1_7_8_4_10_5s_CHARGE_M2…</div><div class="c2">MCD-Hub</div><div class="c3 kb"><svg class="ib" width="10" height="10" viewBox="0 0 10 10"><defs><linearGradient id="bx" x1="0" y1="0" x2="0" y2="1"><stop offset="0" stop-color="#e3ac7c"/><stop offset="1" stop-color="#c98858"/></linearGradient></defs><rect x="4.3" y="1.7" width="5.3" height="7.9" fill="#c08552" stroke="#5a2a0c" stroke-width="0.7"/><path d="M9.5 2.4 V9.5 H5" stroke="#431a04" stroke-width="0.9" fill="none"/><rect x="0.2" y="0.2" width="5.4" height="8" fill="url(#bx)" stroke="#7a4420" stroke-width="0.6"/><path d="M4.6 3.2 L3.4 5 L5 6.6 M6.4 3.2 C7.8 2.8 8 4.2 6.6 5.6 L6.4 6.8 H8.2" stroke="#3a1804" stroke-width="0.85" fill="none"/></svg><span>MM-1070:1</span></div><div class="c4">Running</div><div class="c5">YV1GWAA50D1119511</div><div class="c6">MM-1070:1</div><div class="c7">Hybrid</div></div>
<div class="r g" style="top:572px"><div class="c0">8590</div><div class="c1">SOH</div><div class="c2">SoH</div><div class="c3"><span>04-1B-94-00-0D-27</span></div><div class="c4">Running</div><div class="c5">YV1FW79C1H1368838</div><div class="c6">MM-2853:1</div><div class="c7"></div></div>
<div class="r g" style="top:594px"><div class="c0">8594</div><div class="c1">ECU_Info.seq</div><div class="c2">IDC</div><div class="c3"><span>04-1B-94-00-0D-27</span></div><div class="c4">Running</div><div class="c5">YV1FW79C1H1368838</div><div class="c6">MM-2853:1</div><div class="c7"></div></div>
<div class="r g" style="top:616px"><div class="c0">8753</div><div class="c1">VIDEO</div><div class="c2">Video</div><div class="c3"><span>04-1B-94-00-1D-10</span></div><div class="c4">Running</div><div class="c5">INFORIGGV54100101</div><div class="c6">MM-3611:1</div><div class="c7"></div></div>
<div class="r w a" style="top:638px"><div class="c0">8785</div><div class="c1">517B_2.21_15.2.haf</div><div class="c2">Signal reader</div><div class="c3 kb"><svg class="ib" width="10" height="10" viewBox="0 0 10 10"><defs><linearGradient id="bx" x1="0" y1="0" x2="0" y2="1"><stop offset="0" stop-color="#e3ac7c"/><stop offset="1" stop-color="#c98858"/></linearGradient></defs><rect x="4.3" y="1.7" width="5.3" height="7.9" fill="#c08552" stroke="#5a2a0c" stroke-width="0.7"/><path d="M9.5 2.4 V9.5 H5" stroke="#431a04" stroke-width="0.9" fill="none"/><rect x="0.2" y="0.2" width="5.4" height="8" fill="url(#bx)" stroke="#7a4420" stroke-width="0.6"/><path d="M4.6 3.2 L3.4 5 L5 6.6 M6.4 3.2 C7.8 2.8 8 4.2 6.6 5.6 L6.4 6.8 H8.2" stroke="#3a1804" stroke-width="0.85" fill="none"/></svg><span>04-1B-94-00-24-B4</span></div><div class="c4">Stop pending</div><div class="c5">YV1PZA3BCJ1023367</div><div class="c6">MM-5092:1</div><div class="c7">CFD_SPA_517B_T20</div></div>
<div class="r g" style="top:660px"><div class="c0">8852</div><div class="c1">517B_PHEV_2.21_15.2.haf</div><div class="c2">Signal reader</div><div class="c3 kb"><svg class="ib" width="10" height="10" viewBox="0 0 10 10"><defs><linearGradient id="bx" x1="0" y1="0" x2="0" y2="1"><stop offset="0" stop-color="#e3ac7c"/><stop offset="1" stop-color="#c98858"/></linearGradient></defs><rect x="4.3" y="1.7" width="5.3" height="7.9" fill="#c08552" stroke="#5a2a0c" stroke-width="0.7"/><path d="M9.5 2.4 V9.5 H5" stroke="#431a04" stroke-width="0.9" fill="none"/><rect x="0.2" y="0.2" width="5.4" height="8" fill="url(#bx)" stroke="#7a4420" stroke-width="0.6"/><path d="M4.6 3.2 L3.4 5 L5 6.6 M6.4 3.2 C7.8 2.8 8 4.2 6.6 5.6 L6.4 6.8 H8.2" stroke="#3a1804" stroke-width="0.85" fill="none"/></svg><span>04-1B-94-00-24-A4</span></div><div class="c4">Running</div><div class="c5">YV1PWBABDJ1057041</div><div class="c6">MM-5089:1</div><div class="c7">BD_SPA_517B_Hybrid</div></div>
<div class="r g" style="top:682px"><div class="c0">8852</div><div class="c1">517B_PHEV_2.21_15.2.haf</div><div class="c2">Signal reader</div><div class="c3 kb"><svg class="ib" width="10" height="10" viewBox="0 0 10 10"><defs><linearGradient id="bx" x1="0" y1="0" x2="0" y2="1"><stop offset="0" stop-color="#e3ac7c"/><stop offset="1" stop-color="#c98858"/></linearGradient></defs><rect x="4.3" y="1.7" width="5.3" height="7.9" fill="#c08552" stroke="#5a2a0c" stroke-width="0.7"/><path d="M9.5 2.4 V9.5 H5" stroke="#431a04" stroke-width="0.9" fill="none"/><rect x="0.2" y="0.2" width="5.4" height="8" fill="url(#bx)" stroke="#7a4420" stroke-width="0.6"/><path d="M4.6 3.2 L3.4 5 L5 6.6 M6.4 3.2 C7.8 2.8 8 4.2 6.6 5.6 L6.4 6.8 H8.2" stroke="#3a1804" stroke-width="0.85" fill="none"/></svg><span>04-1B-94-00-24-E6</span></div><div class="c4">Running</div><div class="c5">LVYPSBABDJP040166</div><div class="c6">MM-4997:1</div><div class="c7">BD_SPA_517B_Hybrid</div></div>
<div class="r w" style="top:704px"><div class="c0">8854</div><div class="c1">EUCD_STD_1_2_M3404.haf</div><div class="c2">Signal reader</div><div class="c3 kb"><svg class="ib" width="10" height="10" viewBox="0 0 10 10"><defs><linearGradient id="bx" x1="0" y1="0" x2="0" y2="1"><stop offset="0" stop-color="#e3ac7c"/><stop offset="1" stop-color="#c98858"/></linearGradient></defs><rect x="4.3" y="1.7" width="5.3" height="7.9" fill="#c08552" stroke="#5a2a0c" stroke-width="0.7"/><path d="M9.5 2.4 V9.5 H5" stroke="#431a04" stroke-width="0.9" fill="none"/><rect x="0.2" y="0.2" width="5.4" height="8" fill="url(#bx)" stroke="#7a4420" stroke-width="0.6"/><path d="M4.6 3.2 L3.4 5 L5 6.6 M6.4 3.2 C7.8 2.8 8 4.2 6.6 5.6 L6.4 6.8 H8.2" stroke="#3a1804" stroke-width="0.85" fill="none"/></svg><span>04-1B-94-00-24-64</span></div><div class="c4">Pending</div><div class="c5">YV1GWBNH0J2398414</div><div class="c6">MM-5072:1</div><div class="c7">BD_EUCD_Hybrid</div></div>
<div class="r g" style="top:726px"><div class="c0">8854</div><div class="c1">EUCD_STD_1_2_M3404.haf</div><div class="c2">Signal reader</div><div class="c3 kb"><svg class="ib" width="10" height="10" viewBox="0 0 10 10"><defs><linearGradient id="bx" x1="0" y1="0" x2="0" y2="1"><stop offset="0" stop-color="#e3ac7c"/><stop offset="1" stop-color="#c98858"/></linearGradient></defs><rect x="4.3" y="1.7" width="5.3" height="7.9" fill="#c08552" stroke="#5a2a0c" stroke-width="0.7"/><path d="M9.5 2.4 V9.5 H5" stroke="#431a04" stroke-width="0.9" fill="none"/><rect x="0.2" y="0.2" width="5.4" height="8" fill="url(#bx)" stroke="#7a4420" stroke-width="0.6"/><path d="M4.6 3.2 L3.4 5 L5 6.6 M6.4 3.2 C7.8 2.8 8 4.2 6.6 5.6 L6.4 6.8 H8.2" stroke="#3a1804" stroke-width="0.85" fill="none"/></svg><span>04-1B-94-00-25-0A</span></div><div class="c4">Running</div><div class="c5">YV1GWBNH0J2397910</div><div class="c6">MM-5073:1</div><div class="c7">BD_EUCD_Hybrid</div></div>
<div class="r w" style="top:748px"><div class="c0">8854</div><div class="c1">314H_PP_1_7_8_4_V61.haf</div><div class="c2">Signal reader</div><div class="c3 kb"><svg class="ib" width="10" height="10" viewBox="0 0 10 10"><defs><linearGradient id="bx" x1="0" y1="0" x2="0" y2="1"><stop offset="0" stop-color="#e3ac7c"/><stop offset="1" stop-color="#c98858"/></linearGradient></defs><rect x="4.3" y="1.7" width="5.3" height="7.9" fill="#c08552" stroke="#5a2a0c" stroke-width="0.7"/><path d="M9.5 2.4 V9.5 H5" stroke="#431a04" stroke-width="0.9" fill="none"/><rect x="0.2" y="0.2" width="5.4" height="8" fill="url(#bx)" stroke="#7a4420" stroke-width="0.6"/><path d="M4.6 3.2 L3.4 5 L5 6.6 M6.4 3.2 C7.8 2.8 8 4.2 6.6 5.6 L6.4 6.8 H8.2" stroke="#3a1804" stroke-width="0.85" fill="none"/></svg><span>04-1B-94-00-24-B4</span></div><div class="c4">Pending</div><div class="c5">YV1PZA3BCJ1023367</div><div class="c6">MM-5092:1</div><div class="c7">CFD_SPA_517B_T20</div></div>
 </div>
 <div id="sb">
  <div class="abs" style="left:0;top:1px;width:15px;height:15px;border:1px solid #b4b4b4;border-radius:2px;background:linear-gradient(90deg,#fdfdfd,#ececec 50%,#cdcfd1);box-shadow:inset 1px 1px 0 #fff"><svg class="abs" style="left:4px;top:4px" width="7" height="4" viewBox="0 0 7 4"><path d="M0 4 L3.5 0.3 L7 4 Z" fill="#333"/></svg></div>
  <div class="abs" style="left:0;top:16px;width:15px;height:641px;border:1px solid #b4b4b4;border-radius:2px;background:linear-gradient(90deg,#fdfdfd,#efefef 45%,#c9cbcd);box-shadow:inset 1px 1px 0 #fff"><svg class="abs" style="left:3px;top:313px" width="7" height="9" viewBox="0 0 7 9"><path d="M0 0.5 H7 M0 3 H7 M0 5.5 H7 M0 8 H7" stroke="#5a5a5a" stroke-width="1"/></svg></div>
  <div class="abs" style="left:0;top:740px;width:15px;height:16px;border:1px solid #b4b4b4;border-radius:2px;background:linear-gradient(90deg,#fdfdfd,#ececec 50%,#cdcfd1);box-shadow:inset 1px 1px 0 #fff"><svg class="abs" style="left:4px;top:6px" width="7" height="4" viewBox="0 0 7 4"><path d="M0 0 L3.5 3.7 L7 0 Z" fill="#333"/></svg></div>
 </div>
</div>
<div id="status">Fetched 39 of 39 rows
 <svg class="abs" style="left:1697.5px;top:5px" width="13" height="12" viewBox="0 0 13 12"><path d="M2.2 0.2 H4.8 V1.6 L5.7 3.6 H7.1 L7.9 1.6 V0.2 H10.5 V1.6 L12.7 8 V11.8 H7.3 V7 H5.6 V11.8 H0.2 V8 L2.2 1.6 Z" fill="#232323"/><path d="M1.2 8.2 H4.6 M8.4 8.2 H11.8" stroke="#4a4a4a" stroke-width="0.8"/></svg>
 <svg class="abs" style="left:1726px;top:5px" width="16" height="15" viewBox="0 0 16 15"><path d="M2.2 0.2 H4.8 V1.6 L5.7 3.6 H7.1 L7.9 1.6 V0.2 H10.5 V1.6 L12.7 8 V11.8 H7.3 V7 H5.6 V11.8 H0.2 V8 L2.2 1.6 Z" fill="#232323"/><path d="M1.2 8.2 H4.6 M8.4 8.2 H11.8" stroke="#4a4a4a" stroke-width="0.8"/><path d="M9.6 5.8 V14.6 M5.2 10.2 H14" stroke="#0a8f28" stroke-width="3.4"/><path d="M9.6 6.3 V14.1 M5.7 10.2 H13.5" stroke="#1fc846" stroke-width="2.2"/></svg>
 <div class="abs" style="left:1749px;top:5px;width:1px;height:12px;background:#a0a0a0;border-right:1px solid #fafafa;box-sizing:content-box"></div>
 <svg class="abs" style="left:1760px;top:2px" width="18" height="18" viewBox="0 0 18 18"><defs><radialGradient id="lg" cx="0.4" cy="0.35" r="0.7"><stop offset="0" stop-color="#f2f9fd"/><stop offset="1" stop-color="#b5d6ec"/></radialGradient></defs><path d="M1.2 16.6 L7.6 9.6" stroke="#8a8a8a" stroke-width="2" stroke-linecap="round"/><path d="M1.6 16.2 L7.6 9.6" stroke="#5d5d5d" stroke-width="0.8"/><circle cx="11.2" cy="6" r="4.9" fill="url(#lg)" stroke="#a9cbe2" stroke-width="0.9"/></svg>
 <svg class="abs" style="left:1788px;top:2px" width="18" height="18" viewBox="0 0 18 18"><defs><radialGradient id="lg" cx="0.4" cy="0.35" r="0.7"><stop offset="0" stop-color="#f2f9fd"/><stop offset="1" stop-color="#b5d6ec"/></radialGradient></defs><path d="M1.2 16.6 L7.6 9.6" stroke="#8a8a8a" stroke-width="2" stroke-linecap="round"/><path d="M1.6 16.2 L7.6 9.6" stroke="#5d5d5d" stroke-width="0.8"/><circle cx="11.2" cy="6" r="4.9" fill="url(#lg)" stroke="#a9cbe2" stroke-width="0.9"/><path d="M11.6 7.6 V16.4 M7.2 12 H16" stroke="#0a8f28" stroke-width="3.4"/><path d="M11.6 8.1 V15.9 M7.7 12 H15.5" stroke="#1fc846" stroke-width="2.2"/></svg>
 <svg class="abs" style="left:1816px;top:2px" width="17" height="18" viewBox="0 0 17 18"><ellipse cx="10" cy="15.5" rx="5.5" ry="1.6" fill="#cfcfcf"/><path d="M2 1.5 L5.2 6.2" stroke="#c8791f" stroke-width="2.2" stroke-linecap="round"/><path d="M3.8 6.8 L6.8 4.8 C9.5 7 13 10.5 14.2 13.2 C12 15.8 9 16 6.8 15 C6.8 12 5.6 9 3.8 6.8 Z" fill="#f1c834"/><path d="M7 8 L9.5 14.8 M8.5 7 L12 14" stroke="#d8a516" stroke-width="0.7" fill="none"/><path d="M3.6 6.9 L7 4.6" stroke="#c4202a" stroke-width="1.6"/></svg>
</div>
<!-- bottom buttons -->
<div class="btn" style="left:8px;top:1023px;width:100px">Get Result Files</div>
<div class="btn" style="left:108px;top:1023px;width:100px">View Assignment</div>
<div class="btn" style="left:208px;top:1023px;width:100px">Get Log Files</div>
<div class="btn" style="left:308px;top:1023px;width:100px">Plot Route</div>
<div class="btn" style="left:408px;top:1023px;width:100px">New Task</div>
<div class="btn" style="left:508px;top:1023px;width:100px">Refresh</div>
<div class="btn" style="left:608px;top:1023px;width:100px">View Car</div>
<div class="btn dis" style="left:708px;top:1023px;width:100px">Monitor Signals</div>
<div class="btn dis" style="left:1249px;top:1023px;width:150px">Resume Assignment</div>
<div class="btn dis" style="left:1399px;top:1023px;width:150px">Cancel Assignment</div>
<div class="btn over" style="left:1549px;top:1023px;width:150px">Stop Assignment</div>
<div class="btn dis" style="left:1699px;top:1023px;width:150px">Force Stop Assignment</div>
<!-- tooltip -->
<div class="abs" style="left:1601px;top:970px;width:100px;height:48px;background:#ffffcc;border:1px solid #9d9d9d;font-size:11px;line-height:12px;padding:5px 0 0 5px;z-index:20">Stops the<br>assignment on<br>the WCU.</div>
<!-- red highlight -->
<svg class="abs" style="left:1515px;top:958px;z-index:30" width="230" height="97" viewBox="0 0 230 97"><rect x="8.5" y="8.55" width="210.2" height="88.2" fill="none" stroke="#f70000" stroke-width="7.5" stroke-linejoin="round"/></svg>
<div id="lborder"></div>
</body></html>
